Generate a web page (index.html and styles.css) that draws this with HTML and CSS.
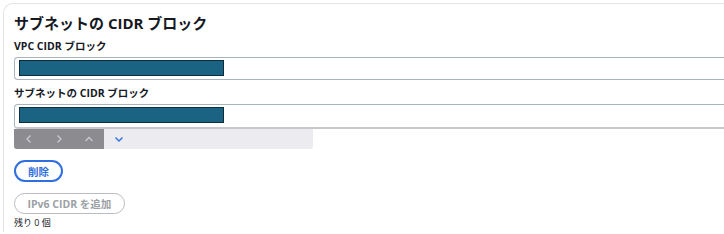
FILE: index.html
```html
<!DOCTYPE html>
<html lang="ja">
<head>
    <meta charset="UTF-8">
    <title>サブネットの CIDR ブロック</title>
    <link rel="stylesheet" href="styles.css">
</head>
<body>
    <div class="panel">
        <h2 class="panel-title">サブネットの CIDR ブロック</h2>

        <!-- VPC -->
        <div class="field">
            <label class="field-label">VPC CIDR ブロック</label>
            <div class="input"><span class="mask"></span></div>
        </div>

        <!-- サブネット -->
        <div class="field">
            <label class="field-label">サブネットの CIDR ブロック</label>
            <div class="input input-tall"><span class="mask"></span></div>
            <div class="toolbar">
                <div class="toolbar-dark">
                    <span class="tb-btn">
                        <svg width="10" height="10" viewBox="0 0 10 10"><path d="M6.5 1.5 3 5l3.5 3.5" fill="none" stroke="#c9c9cf" stroke-width="1.3"/></svg>
                    </span>
                    <span class="tb-btn">
                        <svg width="10" height="10" viewBox="0 0 10 10"><path d="M3.5 1.5 7 5 3.5 8.5" fill="none" stroke="#c9c9cf" stroke-width="1.3"/></svg>
                    </span>
                    <span class="tb-btn">
                        <svg width="10" height="10" viewBox="0 0 10 10"><path d="M1.5 7 5 3.5 8.5 7" fill="none" stroke="#c9c9cf" stroke-width="1.3"/></svg>
                    </span>
                </div>
                <span class="tb-btn">
                    <svg width="10" height="10" viewBox="0 0 10 10"><path d="M1.5 3.5 5 7 8.5 3.5" fill="none" stroke="#2f6fe0" stroke-width="1.4"/></svg>
                </span>
            </div>
        </div>

        <button class="btn btn-primary">削除</button>

        <div class="add-row">
            <button class="btn btn-disabled" disabled>IPv6 CIDR を追加</button>
            <div class="hint">残り 0 個</div>
        </div>
    </div>
</body>
</html>
```

FILE: styles.css
```css
body {
    margin: 0;
    padding: 3px 0 0 3px;
    background: #fff;
    font-family: "Open Sans", "Noto Sans CJK JP", sans-serif;
    color: #16191f;
    overflow: hidden;
}

/* 外枠 */
.panel {
    border-top: 1px solid #e3e5e8;
    border-left: 1px solid #e3e5e8;
    border-top-left-radius: 10px;
    padding: 8px 0 0 10px;
    height: 220px;
}

.panel-title {
    margin: 0 0 4px;
    font-size: 15px;
    font-weight: 700;
    line-height: 22px;
}

.field-label {
    display: block;
    font-size: 10.5px;
    font-weight: 700;
    line-height: 16px;
    margin-bottom: 3px;
}

.field {
    margin-bottom: 5px;
}

.input {
    height: 19px;
    border: 1px solid #aab2bb;
    border-right: none;
    border-radius: 4px 0 0 4px;
    padding: 2px 0 0 4px;
}

.input-tall {
    height: 20px;
    border-bottom: 2px solid #c8c8cc;
}

.mask {
    display: block;
    width: 203px;
    height: 14px;
    background: #1a6383;
    border: 1px solid #0e2d3b;
}

/* ナビゲーション */
.toolbar {
    display: flex;
    width: 299px;
    height: 20px;
    background: #ebebf0;
    border-radius: 0 0 3px 3px;
}

.toolbar-dark {
    display: flex;
    width: 90px;
    background: #8b8b90;
    border-radius: 0 0 0 3px;
}

.tb-btn {
    width: 30px;
    display: flex;
    align-items: center;
    justify-content: center;
}

.btn {
    display: block;
    font-family: "Open Sans", "Noto Sans CJK JP", sans-serif;
    font-size: 10.5px;
    font-weight: 700;
    border-radius: 12px;
    background: #fff;
    height: 22px;
    padding: 0 12px;
}

.btn-primary {
    color: #2f6fe0;
    border: 2px solid #2f6fe0;
    margin-top: 11px;
}

.add-row {
    margin-top: 11px;
}

.btn-disabled {
    color: #9ba0a6;
    border: 1.5px solid #b8bcc1;
    height: 21px;
    padding: 0 12.5px;
}

.hint {
    font-size: 9px;
    margin-top: 3px;
    line-height: 12px;
}
```
